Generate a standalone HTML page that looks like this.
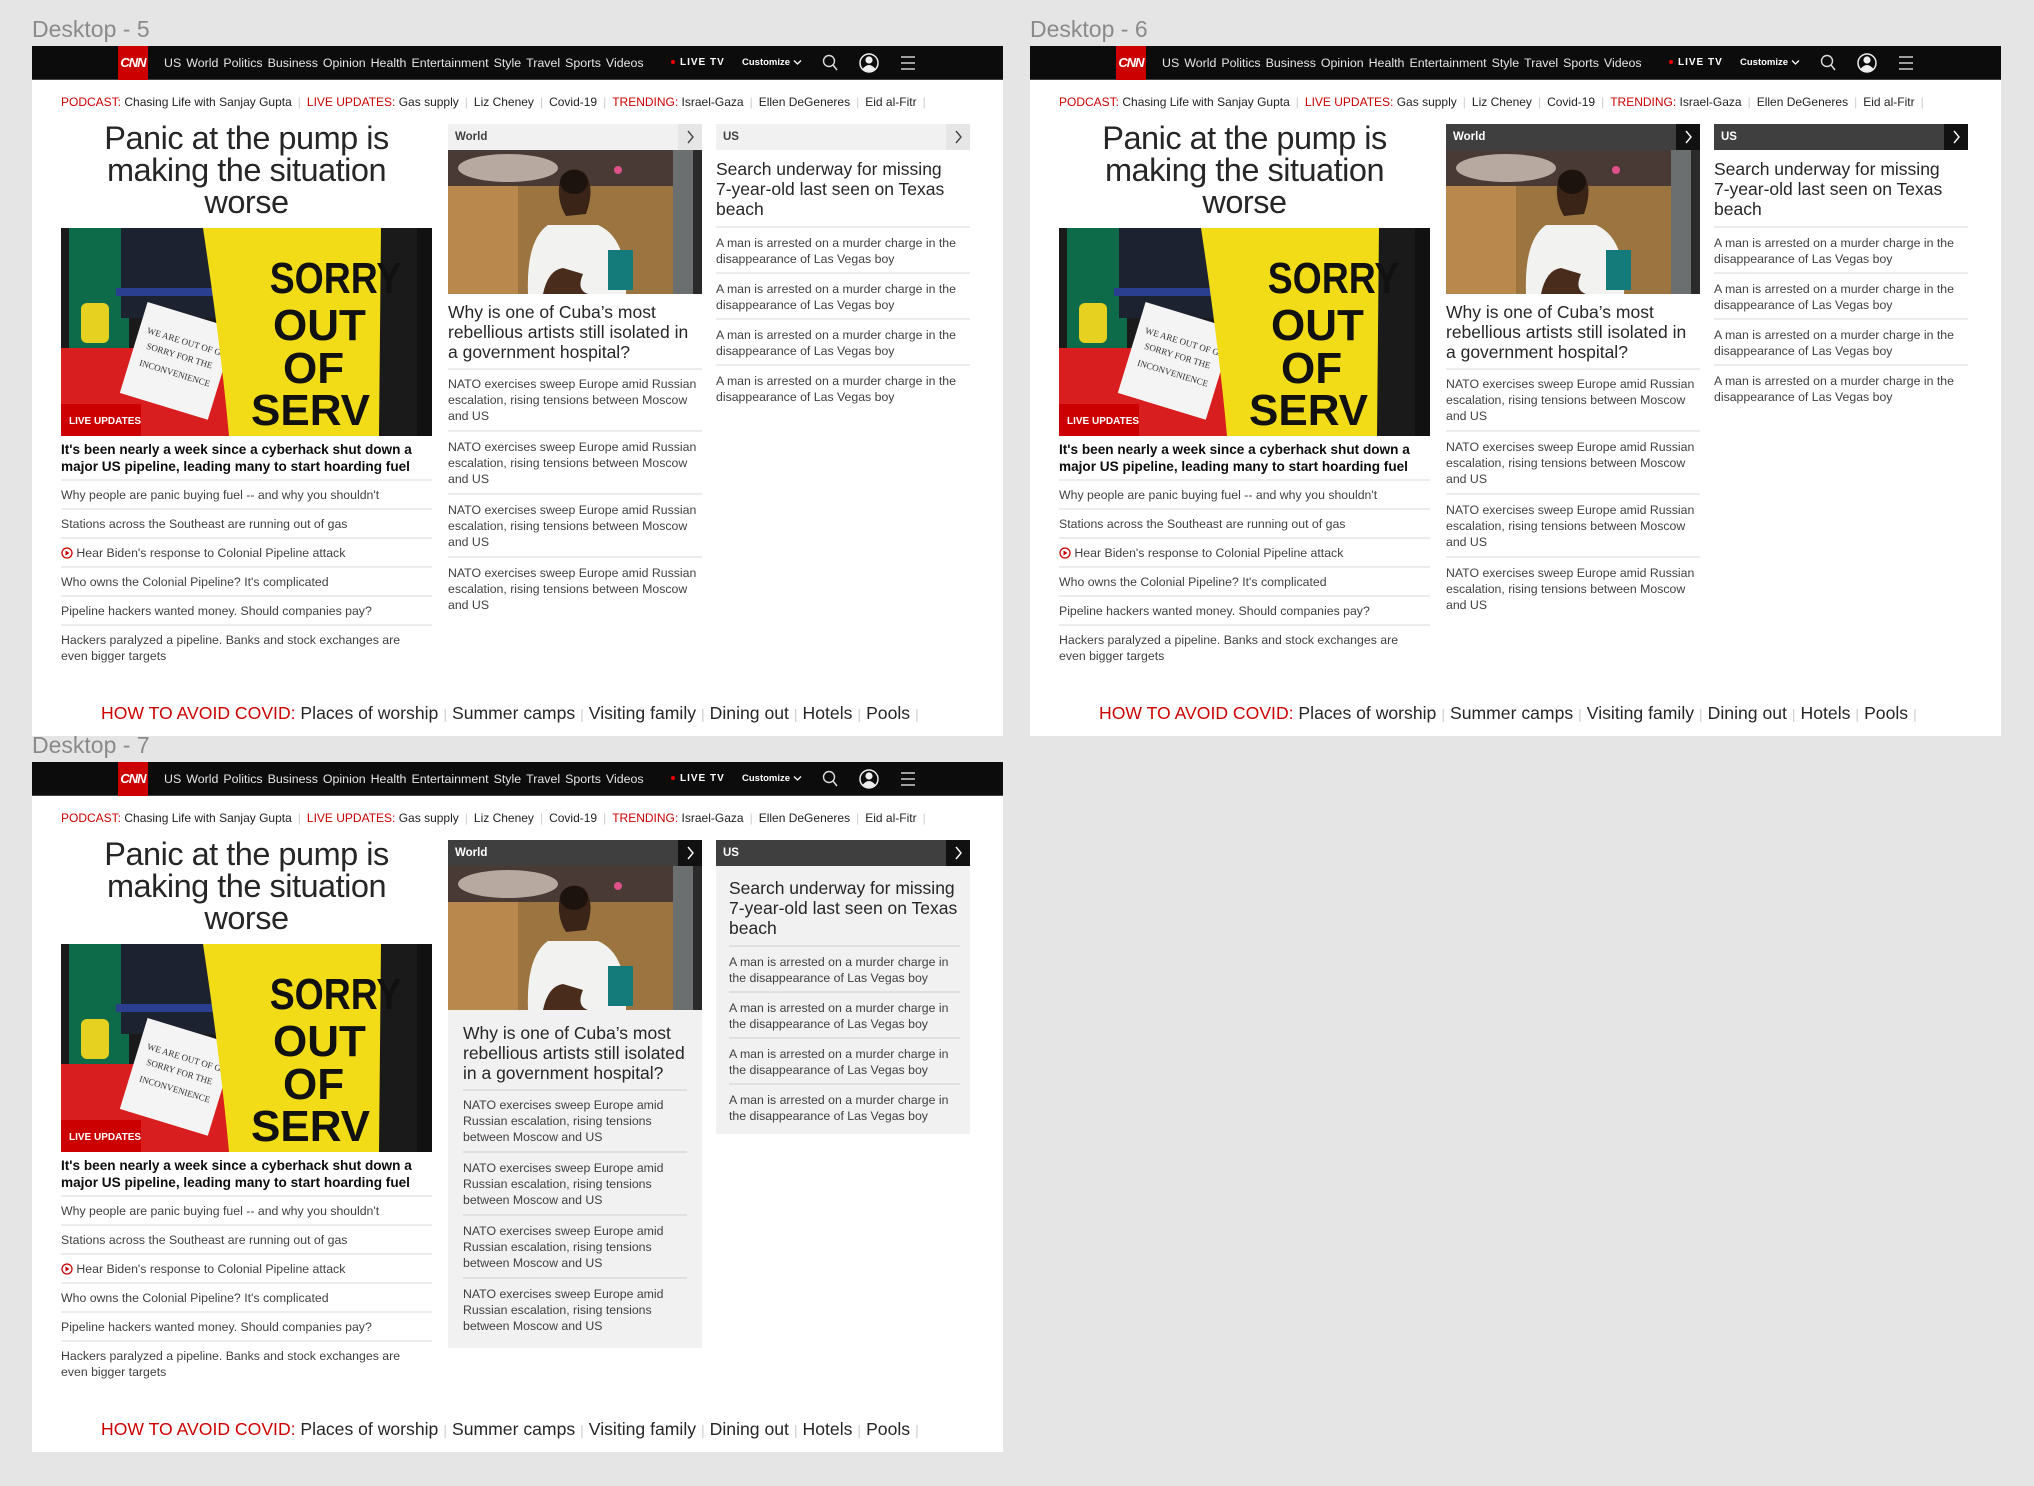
<!DOCTYPE html>
<html><head><meta charset="utf-8">
<style>
*{margin:0;padding:0;box-sizing:border-box}
body{width:2034px;height:1486px;background:#e5e5e5;font-family:"Liberation Sans",Arial,sans-serif;position:relative;overflow:hidden;color:#262626}
.lbl{position:absolute;font-size:23px;color:#8a8a8a}
.fr{position:absolute;width:971px;height:690px;background:#fff;overflow:hidden}
.hd{position:absolute;left:0;top:0;width:971px;height:34px;background:#0c0c0c;border-bottom:1px solid #444}
.logo{position:absolute;left:86px;top:0;width:30px;height:34px;background:#cc0000;color:#fff;font-weight:bold;font-size:13px;line-height:34px;text-align:center;letter-spacing:-1px;font-style:italic}
.nav{position:absolute;left:132px;top:0;line-height:34px;font-size:12.4px;color:#e6e6e6;white-space:nowrap}
.nav span{margin-right:5px}
.live{position:absolute;left:639px;top:0;line-height:34px;font-size:10px;font-weight:bold;color:#fff;letter-spacing:1px}
.live:before{content:"";display:inline-block;width:4px;height:4px;border-radius:50%;background:#e00;margin-right:5px;vertical-align:middle}
.cust{position:absolute;left:710px;top:0;line-height:34px;font-size:9.5px;font-weight:bold;color:#fff}
.ic{position:absolute;top:0}
.tr{position:absolute;left:29px;top:48px;font-size:12px;color:#222;white-space:nowrap;line-height:16px}
.tr .r{color:#cc0000}
.tr .s{color:#ccc;margin:0 6px}
.lc{position:absolute;left:29px;top:76px;width:371px}
.h1{font-size:32.5px;line-height:32px;text-align:center;color:#262626;letter-spacing:-.5px;padding:0 10px}
.pimg{margin-top:10px;width:371px;height:208px;position:relative;overflow:hidden}
.bold{margin-top:5px;font-size:13.6px;font-weight:bold;line-height:17px;color:#0c0c0c;padding-bottom:4px}
.li{border-top:2px solid #ececec;padding:6px 20px 5px 0;font-size:12.3px;line-height:16px;color:#404040}
.col{position:absolute;top:78px;width:254px}
.ch{height:26px;background:#f1f1f1;position:relative;font-size:11.5px;font-weight:bold;line-height:26px;padding-left:7px;color:#404040}
.ch .cv{position:absolute;right:0;top:0;width:24px;height:26px;background:#e6e6e6}
.mimg{width:254px;height:144px;position:relative;overflow:hidden}
.h2{font-size:17.5px;line-height:20px;color:#262626}
.ni{border-top:2px solid #ececec;font-size:12.3px;line-height:16px;color:#404040}
.cov{position:absolute;left:69px;top:656px;font-size:17.6px;line-height:22px;color:#262626;white-space:nowrap}
.cov .r{color:#cc0000}
.cov .s{color:#ccc;margin:0 5px;font-size:14px}
.v2 .ch{background:#3f3f3f;color:#fff}
.v2 .ch .cv{background:#111}
.v3 .ch{background:#3f3f3f;color:#fff}
.v3 .ch .cv{background:#111}
</style></head><body>

<div class="lbl" style="left:32px;top:16px">Desktop - 5</div>
<div class="lbl" style="left:1030px;top:16px">Desktop - 6</div>
<div class="lbl" style="left:32px;top:732px">Desktop - 7</div>

<div class="fr v1" style="left:32px;top:46px">
<div class="hd"><div class="logo">CNN</div>
<div class="nav"><span>US</span><span>World</span><span>Politics</span><span>Business</span><span>Opinion</span><span>Health</span><span>Entertainment</span><span>Style</span><span>Travel</span><span>Sports</span><span>Videos</span></div>
<div class="live">LIVE TV</div><div class="cust">Customize <svg width="9" height="7" viewBox="0 0 9 7" style="vertical-align:middle"><polyline points="1,1.5 4.5,5 8,1.5" fill="none" stroke="#fff" stroke-width="1.3"/></svg></div>
<svg class="ic" style="left:789px" width="20" height="34" viewBox="0 0 20 34"><circle cx="8" cy="15" r="5.5" fill="none" stroke="#ddd" stroke-width="1.4"/><line x1="12" y1="19" x2="16" y2="24" stroke="#ddd" stroke-width="1.5"/></svg>
<svg class="ic" style="left:826px" width="22" height="34" viewBox="0 0 22 34"><circle cx="11" cy="17" r="9" fill="none" stroke="#eee" stroke-width="1.5"/><circle cx="11" cy="14" r="3.6" fill="#eee"/><path d="M4.5 23 Q11 15 17.5 23 Q11 28 4.5 23Z" fill="#eee"/></svg>
<svg class="ic" style="left:867px" width="18" height="34" viewBox="0 0 18 34"><line x1="2" y1="11" x2="16" y2="11" stroke="#ddd" stroke-width="1.4"/><line x1="2" y1="17" x2="16" y2="17" stroke="#ddd" stroke-width="1.4"/><line x1="2" y1="23" x2="16" y2="23" stroke="#ddd" stroke-width="1.4"/></svg>
</div>
<div class="tr"><span class="r">PODCAST:</span> Chasing Life with Sanjay Gupta<span class="s">|</span><span class="r">LIVE UPDATES:</span> Gas supply<span class="s">|</span>Liz Cheney<span class="s">|</span>Covid-19<span class="s">|</span><span class="r">TRENDING:</span> Israel-Gaza<span class="s">|</span>Ellen DeGeneres<span class="s">|</span>Eid al-Fitr<span class="s">|</span></div>
<div class="lc">
<div class="h1">Panic at the pump is making the situation worse</div>
<div class="pimg"><svg width="371" height="208" viewBox="0 0 371 208"><rect width="371" height="208" fill="#1a1a1a"/><rect x="8" y="0" width="60" height="120" fill="#0d6b4a"/><rect x="60" y="0" width="110" height="90" fill="#1c2230"/><rect x="55" y="60" width="110" height="8" fill="#2a3f8f"/><rect x="0" y="120" width="170" height="88" fill="#d81e1e"/><rect x="20" y="75" width="28" height="40" rx="6" fill="#e6d020"/><g transform="rotate(17 115 135)"><rect x="70" y="85" width="92" height="95" fill="#f4f4f4"/><text x="78" y="115" font-family="Liberation Serif" font-size="9" fill="#333">WE ARE OUT OF GAS</text><text x="82" y="130" font-family="Liberation Serif" font-size="9" fill="#333">SORRY FOR THE</text><text x="80" y="148" font-family="Liberation Serif" font-size="9" fill="#333">INCONVENIENCE</text></g><path d="M142 0 H320 L318 208 H168 Q160 120 142 0Z" fill="#f2dc17"/><text x="205" y="65" font-size="44" font-weight="bold" fill="#111" font-family="Liberation Sans" transform="scale(0.85 1)" transform-origin="230 0">SORRY</text><text x="212" y="112" font-size="44" font-weight="bold" fill="#111" font-family="Liberation Sans">OUT</text><text x="222" y="155" font-size="44" font-weight="bold" fill="#111" font-family="Liberation Sans">OF</text><text x="190" y="197" font-size="44" font-weight="bold" fill="#111" font-family="Liberation Sans">SERV</text><rect x="356" y="0" width="15" height="208" fill="#111"/><rect x="0" y="176" width="80" height="32" fill="#cc0000"/><text x="8" y="196" font-size="10" font-weight="bold" fill="#fff" font-family="Liberation Sans">LIVE UPDATES</text></svg></div>
<div class="bold">It's been nearly a week since a cyberhack shut down a major US pipeline, leading many to start hoarding fuel</div>
<div class="li">Why people are panic buying fuel -- and why you shouldn't</div>
<div class="li">Stations across the Southeast are running out of gas</div>
<div class="li"><svg width="12" height="12" viewBox="0 0 12 12" style="vertical-align:-2px"><circle cx="6" cy="6" r="5" fill="none" stroke="#cc0000" stroke-width="1.3"/><path d="M4.5 3.5 L8.5 6 L4.5 8.5Z" fill="#cc0000"/></svg> Hear Biden's response to Colonial Pipeline attack</div>
<div class="li">Who owns the Colonial Pipeline? It's complicated</div>
<div class="li">Pipeline hackers wanted money. Should companies pay?</div>
<div class="li">Hackers paralyzed a pipeline. Banks and stock exchanges are even bigger targets</div>
</div>
<div class="col" style="left:416px">
<div class="ch">World<div class="cv"><svg width="24" height="26" viewBox="0 0 24 26"><polyline points="10,7 15,13 10,19" fill="none" stroke="currentColor" stroke-width="1.4"/></svg></div></div>
<div class="mimg"><svg width="254" height="144" viewBox="0 0 254 144"><rect width="254" height="144" fill="#9c7440"/><rect width="254" height="36" fill="#4a3a36"/><ellipse cx="60" cy="18" rx="50" ry="14" fill="#b7a8a0"/><circle cx="170" cy="20" r="4" fill="#e0508a"/><rect x="225" y="0" width="29" height="144" fill="#6b6f70"/><rect x="0" y="36" width="70" height="108" fill="#b8884c"/><path d="M80 144 Q78 90 100 75 L150 75 Q180 88 178 144Z" fill="#f2f2f0"/><rect x="160" y="100" width="25" height="40" fill="#147a7a"/><path d="M112 30 Q120 14 136 22 Q148 36 138 64 L118 66 Q108 50 112 30Z" fill="#3a2418"/><ellipse cx="126" cy="32" rx="14" ry="12" fill="#1d130e"/><path d="M95 144 Q100 120 115 118 L135 124 Q128 140 140 144Z" fill="#4a2c1c"/><rect x="245" y="0" width="9" height="144" fill="#2a2a2a"/></svg></div>
<div class="h2" style="margin-top:8px">Why is one of Cuba’s most rebellious artists still isolated in a government hospital?</div>
<div class="ni" style="margin-top:6px;padding:6px 0 6px">NATO exercises sweep Europe amid Russian escalation, rising tensions between Moscow and US</div>
<div class="ni" style="padding:7px 0 6px">NATO exercises sweep Europe amid Russian escalation, rising tensions between Moscow and US</div>
<div class="ni" style="padding:7px 0 6px">NATO exercises sweep Europe amid Russian escalation, rising tensions between Moscow and US</div>
<div class="ni" style="padding:7px 0 6px">NATO exercises sweep Europe amid Russian escalation, rising tensions between Moscow and US</div>
</div>
<div class="col" style="left:684px">
<div class="ch">US<div class="cv"><svg width="24" height="26" viewBox="0 0 24 26"><polyline points="10,7 15,13 10,19" fill="none" stroke="currentColor" stroke-width="1.4"/></svg></div></div>
<div class="h2" style="margin-top:9px">Search underway for missing<br>7‑year‑old last seen on Texas<br>beach</div>
<div class="ni" style="margin-top:7px;padding:7px 0 5px">A man is arrested on a murder charge in the disappearance of Las Vegas boy</div>
<div class="ni" style="padding:7px 0 5px">A man is arrested on a murder charge in the disappearance of Las Vegas boy</div>
<div class="ni" style="padding:7px 0 5px">A man is arrested on a murder charge in the disappearance of Las Vegas boy</div>
<div class="ni" style="padding:7px 0 5px">A man is arrested on a murder charge in the disappearance of Las Vegas boy</div>
</div>
<div class="cov"><span class="r">HOW TO AVOID COVID:</span> Places of worship<span class="s">|</span>Summer camps<span class="s">|</span>Visiting family<span class="s">|</span>Dining out<span class="s">|</span>Hotels<span class="s">|</span>Pools<span class="s">|</span></div>
</div>

<script>
var t=document.querySelector('.v1');
var a=t.cloneNode(true);a.className='fr v2';a.style.left='1030px';a.style.top='46px';document.body.appendChild(a);
var b=t.cloneNode(true);b.className='fr v3';b.style.left='32px';b.style.top='762px';document.body.appendChild(b);
var cols=b.querySelectorAll('.col');
var m=cols[0],r=cols[1];
m.style.background='#f1f1f1';m.style.height='508px';
r.style.background='#f1f1f1';r.style.height='294px';
m.querySelectorAll('.h2,.ni').forEach(function(e){e.style.marginLeft='15px';e.style.marginRight='15px';});
m.querySelector('.h2').style.marginTop='13px';
m.querySelectorAll('.ni').forEach(function(e){e.style.borderTopColor='#e0e0e0';});
r.querySelectorAll('.h2,.ni').forEach(function(e){e.style.marginLeft='13px';e.style.marginRight='10px';});
r.querySelector('.h2').style.marginTop='12px';
r.querySelectorAll('.ni').forEach(function(e){e.style.borderTopColor='#e0e0e0';});
document.querySelectorAll('.v2 .cv svg,.v3 .cv svg').forEach(function(s){s.style.color='#fff'});
document.querySelectorAll('.v1 .cv svg').forEach(function(s){s.style.color='#444'});
</script>
</body></html>
